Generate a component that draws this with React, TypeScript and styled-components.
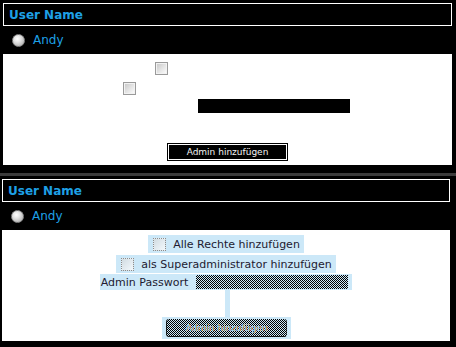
import styled, { createGlobalStyle, css } from 'styled-components';

const GlobalStyle = createGlobalStyle`
  html, body {
    margin: 0;
    padding: 0;
    background: #000;
  }
  body {
    font-family: 'DejaVu Sans', Verdana, sans-serif;
  }
`;

const HIGHLIGHT = '#cce8f8';
const LINK_BLUE = '#1ea0e6';

const dither = css`
  background-color: ${HIGHLIGHT};
  background-image: repeating-conic-gradient(#000 0 25%, ${HIGHLIGHT} 0 50%);
  background-size: 2px 2px;
`;

type Selectable = { $selected?: boolean };

const Page = styled.div`
  width: 456px;
  height: 347px;
  overflow: hidden;
  display: flex;
  flex-direction: column;
  background: #000;
`;

const Panel = styled.div<{ $inset: number; $bottom: number }>`
  padding: 3px 0 ${(p) => p.$bottom}px ${(p) => p.$inset}px;
  background: #000;
`;

const Separator = styled.div`
  height: 3px;
  background: #3c3c3c;
`;

const Table = styled.div<{ $width: number }>`
  width: ${(p) => p.$width}px;
  display: flex;
  flex-direction: column;
`;

const HeaderCell = styled.div`
  height: 21px;
  border: 1px solid #fff;
  display: flex;
  align-items: center;
  padding-left: 5px;
  font-size: 12px;
  font-weight: bold;
  color: ${LINK_BLUE};
`;

const UserRow = styled.div`
  height: 28px;
  display: flex;
  align-items: center;
  gap: 8px;
  padding-left: 9px;
  font-size: 12px;
  color: ${LINK_BLUE};
`;

const Radio = styled.span`
  width: 11px;
  height: 11px;
  border-radius: 50%;
  border: 1px solid #8a8a8a;
  background: radial-gradient(circle at 40% 35%, #ffffff 0, #e4e4e4 35%, #b4b4b4 80%, #9a9a9a 100%);
  margin-top: 1px;
`;

const Content = styled.div`
  height: 107px;
  padding-top: 4px;
  background: #fff;
  display: flex;
  flex-direction: column;
  align-items: center;
  font-size: 11px;
`;

const Line = styled.div<{ $height: number }>`
  height: ${(p) => p.$height}px;
  display: flex;
  align-items: center;
  justify-content: center;
`;

const Highlight = styled.span<Selectable & { $height: number; $left: number }>`
  height: ${(p) => p.$height}px;
  display: inline-flex;
  align-items: center;
  gap: 7px;
  padding: 0 4px 0 ${(p) => p.$left}px;
  background: ${(p) => (p.$selected ? HIGHLIGHT : 'transparent')};
  color: ${(p) => (p.$selected ? '#221a30' : '#fff')};
  white-space: nowrap;
`;

const Checkbox = styled.span<Selectable>`
  width: 11px;
  height: 11px;
  flex-shrink: 0;
  ${(p) =>
    p.$selected
      ? css`
          border: 1px dotted #8c8c8c;
          background: linear-gradient(135deg, #d2dce2, #f2f8fc);
        `
      : css`
          border: 1px solid #9a9a9a;
          box-shadow: inset 0 0 0 1px #f2f2f2;
          background: linear-gradient(135deg, #c6c6c6, #ffffff);
        `}
`;

const PasswordInput = styled.span<Selectable>`
  width: 152px;
  height: 14px;
  margin-left: 1px;
  ${(p) => (p.$selected ? dither : 'background: #000;')}
`;

const Gap = styled.div`
  height: 27px;
  display: flex;
  justify-content: center;
`;

const Strip = styled.span<Selectable>`
  width: 5px;
  margin-left: 2px;
  background: ${(p) => (p.$selected ? HIGHLIGHT : 'transparent')};
`;

const Button = styled.button<Selectable>`
  width: 121px;
  height: 18px;
  padding: 0;
  font-family: 'DejaVu Sans', Verdana, sans-serif;
  font-size: 9px;
  display: flex;
  align-items: center;
  justify-content: center;
  ${(p) =>
    p.$selected
      ? css`
          ${dither};
          border: 1px dotted #000;
          border-radius: 3px;
          color: #8fd0ff;
          text-shadow: 1px 0 0 #f0a040;
        `
      : css`
          background: #000;
          border: 1px solid #000;
          box-shadow: inset 0 0 0 1px #fff;
          color: #f4f4f4;
        `}
`;

type AdminPanelProps = {
  selected?: boolean;
  inset: number;
  width: number;
  bottom: number;
};

const AdminPanel = ({ selected, inset, width, bottom }: AdminPanelProps) => (
  <Panel $inset={inset} $bottom={bottom}>
    <Table $width={width}>
      <HeaderCell>User Name</HeaderCell>
      <UserRow>
        <Radio />
        <span>Andy</span>
      </UserRow>
      <Content>
        <Line $height={20}>
          <Highlight $selected={selected} $height={18} $left={5}>
            <Checkbox $selected={selected} />
            Alle Rechte hinzufügen
          </Highlight>
        </Line>
        <Line $height={20}>
          <Highlight $selected={selected} $height={18} $left={5}>
            <Checkbox $selected={selected} />
            als Superadministrator hinzufügen
          </Highlight>
        </Line>
        <Line $height={16}>
          <Highlight $selected={selected} $height={16} $left={1}>
            Admin Passwort
            <PasswordInput $selected={selected} />
          </Highlight>
        </Line>
        <Gap>
          <Strip $selected={selected} />
        </Gap>
        <Line $height={22}>
          <Highlight $selected={selected} $height={22} $left={4}>
            <Button type="button" $selected={selected}>
              Admin hinzufügen
            </Button>
          </Highlight>
        </Line>
      </Content>
    </Table>
  </Panel>
);

export default function App() {
  return (
    <>
      <GlobalStyle />
      <Page>
        <AdminPanel inset={3} width={449} bottom={8} />
        <Separator />
        <AdminPanel selected inset={2} width={448} bottom={6} />
      </Page>
    </>
  );
}
